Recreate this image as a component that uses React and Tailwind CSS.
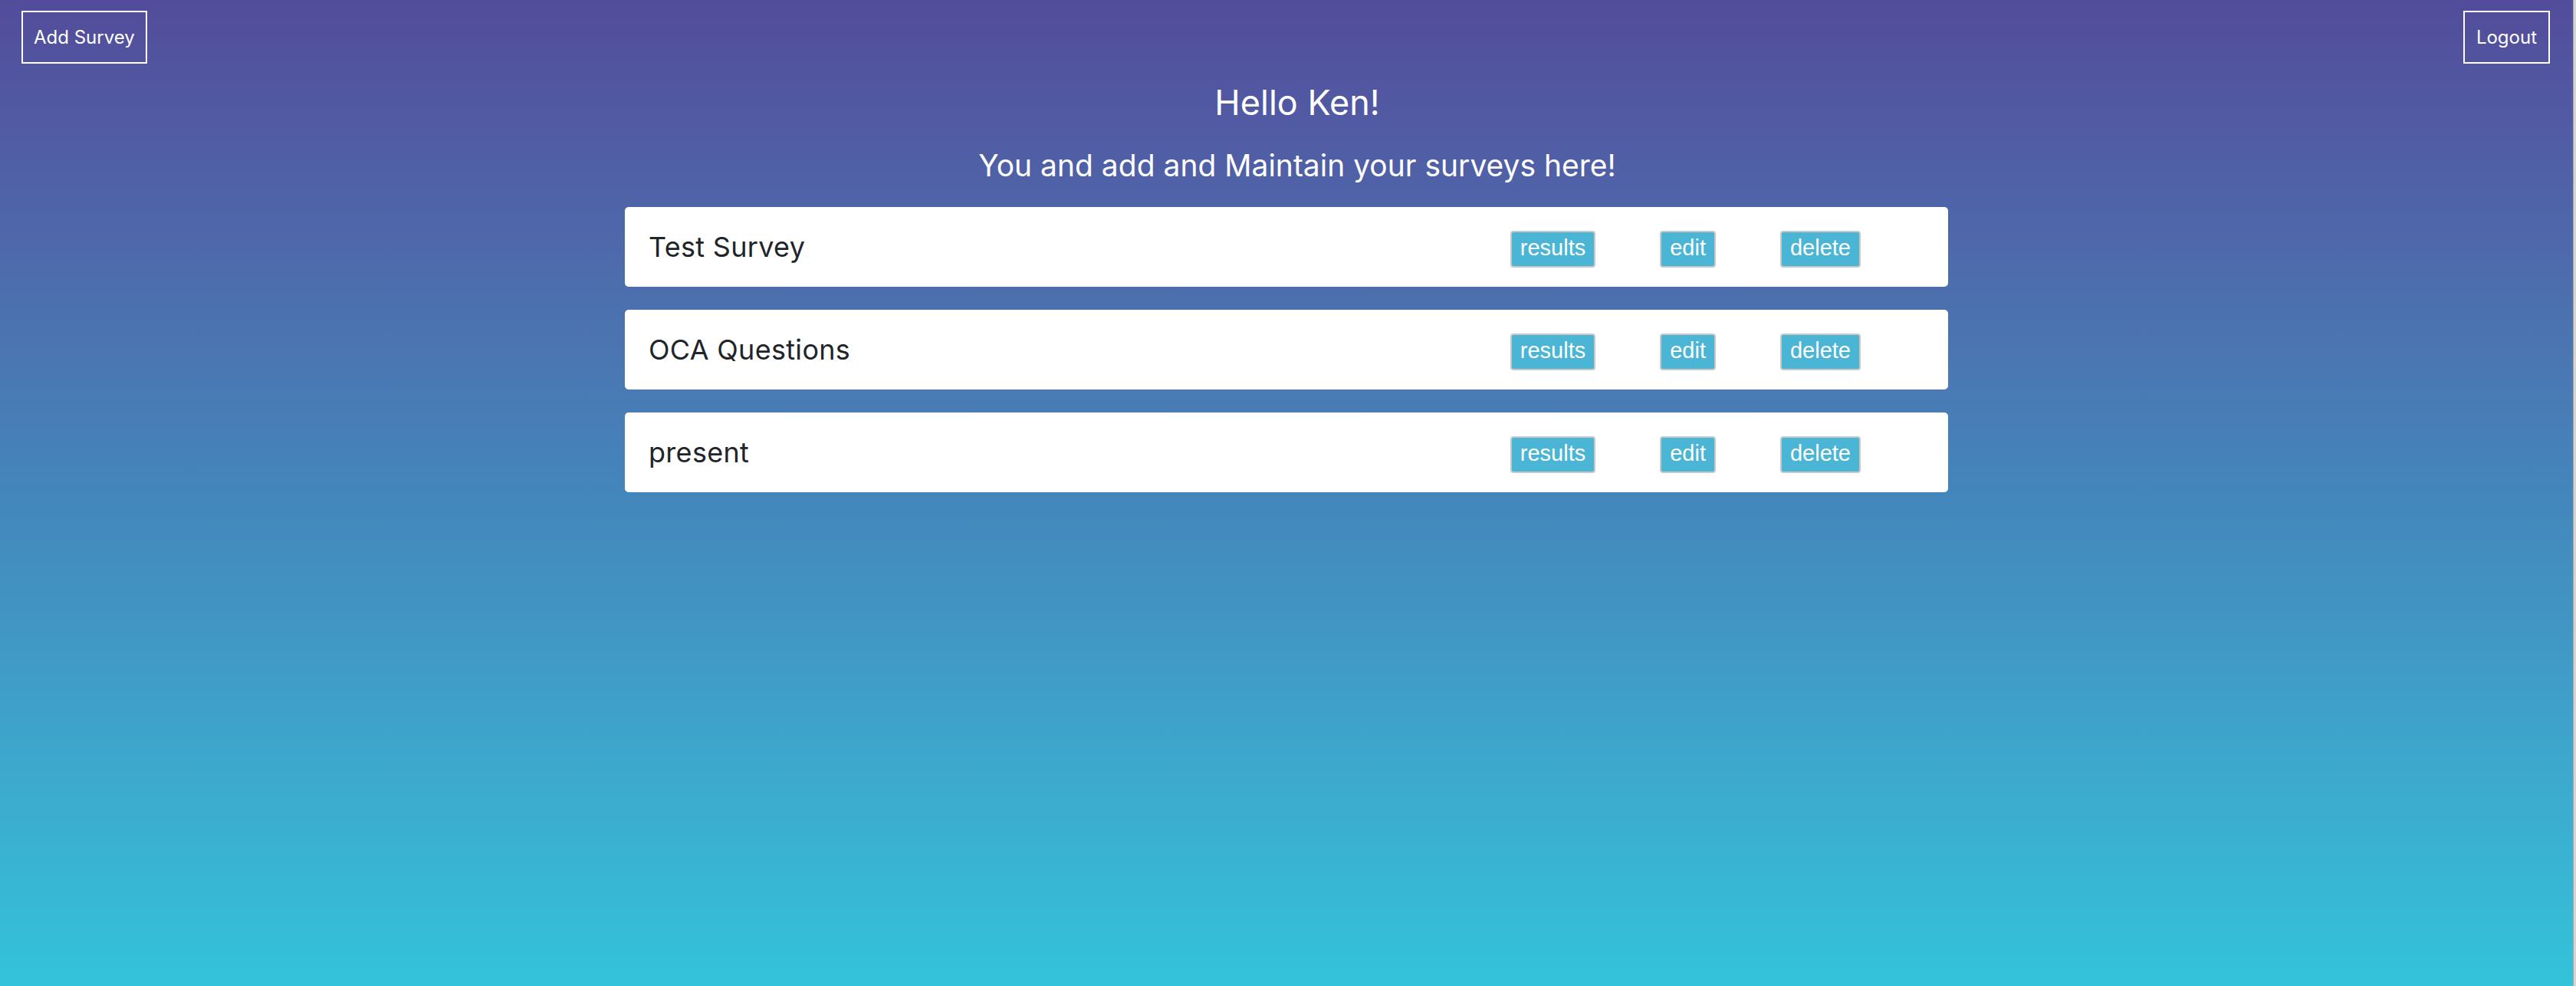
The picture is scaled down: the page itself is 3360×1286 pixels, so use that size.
import React from "react";

const surveys = ["Test Survey", "OCA Questions", "present"];

function ActionButton({ children }) {
  return (
    <button className="h-[48px] px-[11px] border-2 border-[#c8c8c8] rounded-[4px] bg-[#4ab5d4] text-white text-[29px] leading-[33px] pt-[2px] pb-[5px] font-['Liberation_Sans',Arial,sans-serif]">
      {children}
    </button>
  );
}

export default function App() {
  return (
    <div className="flex w-full min-h-[1286px]">
      <div className="flex-1 min-h-[1286px] bg-gradient-to-b from-[#524c9b] via-[#4386bb] to-[#32c3da] font-['Inter','Noto_Sans',sans-serif] text-white">
        <div className="flex justify-between items-start px-[28px] pt-[14px]">
          <button className="h-[69px] px-[14px] border-2 border-white text-[24px] text-white flex items-center">
            Add Survey
          </button>
          <button className="h-[69px] px-[15px] border-2 border-white text-[24px] text-white flex items-center mr-[2px]">
            Logout
          </button>
        </div>
        <div className="flex flex-col items-center pl-[28px] mt-[24px]">
          <h1 className="text-[45px] leading-[54px] font-normal">Hello Ken!</h1>
          <h2 className="text-[39px] leading-[47px] font-normal mt-[31px]">
            You and add and Maintain your surveys here!
          </h2>
        </div>
        <div className="w-[1726px] mx-auto mt-[31px] flex flex-col gap-[30px]">
          {surveys.map((s) => (
            <div
              key={s}
              className="h-[104px] bg-white rounded-[5px] flex items-center pl-[31px] pr-[114px]"
            >
              <div className="text-[36px] text-[#212529] tracking-[0.3px]">{s}</div>
              <div className="ml-auto flex gap-[84px] mt-[6px]">
                <ActionButton>results</ActionButton>
                <ActionButton>edit</ActionButton>
                <ActionButton>delete</ActionButton>
              </div>
            </div>
          ))}
        </div>
      </div>
      <div className="w-[4px] min-h-[1286px] bg-[#d4d4d4] border-l border-[#a8a8a8]" />
    </div>
  );
}
